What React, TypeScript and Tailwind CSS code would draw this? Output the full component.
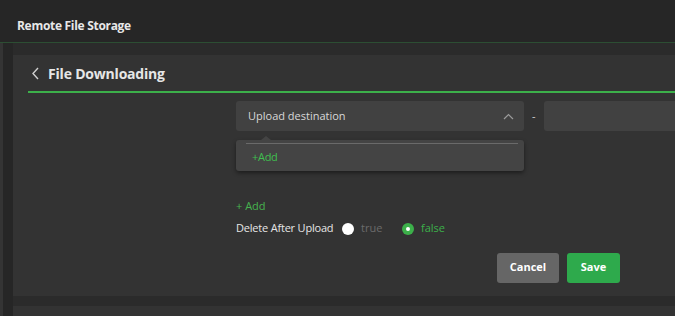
import React from "react";

const font = { fontFamily: '"Open Sans", "Noto Sans", sans-serif' };

function ChevronUp() {
  return (
    <svg width="11" height="7" viewBox="0 0 11 7" fill="none">
      <path d="M1 6 L5.5 1.5 L10 6" stroke="#9a9a9a" strokeWidth="1.2" />
    </svg>
  );
}

export default function App() {
  return (
    <div
      className="w-[675px] h-[316px] overflow-hidden bg-[#2b2b2b] text-white flex flex-col"
      style={font}
    >
      {/* top bar */}
      <div className="h-[43px] shrink-0 bg-[#262626] border-b border-[#2c4e33] flex items-center pl-[17px] pt-[10px]">
        <span className="text-[12px] font-bold text-[#e8e8e8] tracking-[-0.3px]">Remote File Storage</span>
      </div>

      <div className="flex flex-1 min-h-0">
        {/* left strip */}
        <div className="w-[13px] shrink-0 bg-[#262626] border-l-[3px] border-[#343434]" />

        <div className="flex-1 flex flex-col pt-[12px] min-w-0">
          {/* main panel */}
          <div className="h-[241px] shrink-0 bg-[#333333] pl-[15px]">
            <div className="h-[38px] flex items-center border-b-2 border-[#3cb04a] pl-[3px]">
              <svg width="9" height="13" viewBox="0 0 9 13" fill="none" className="mr-[8px]">
                <path d="M7 1 L2 6.5 L7 12" stroke="#d0d0d0" strokeWidth="1.4" />
              </svg>
              <span className="text-[14px] font-bold text-[#e6e6e6] tracking-[-0.2px]">File Downloading</span>
            </div>

            <div className="ml-[208px] pt-[8px]">
              {/* select row */}
              <div className="flex items-center">
                <div className="w-[288px] h-[30px] rounded-[3px] bg-[#414141] flex items-center justify-between pl-[12px] pr-[10px]">
                  <span className="text-[11px] text-[#d8d8d8]">Upload destination</span>
                  <ChevronUp />
                </div>
                <span className="mx-[8px] text-[11px] text-[#cfcfcf]">-</span>
                <div className="flex-1 h-[30px] rounded-l-[3px] bg-[#414141]" />
              </div>

              {/* dropdown */}
              <div className="relative mt-[9px] w-[288px] h-[31px] rounded-[3px] bg-[#444444] shadow-[0_2px_4px_rgba(0,0,0,0.45)]">
                <div className="absolute left-[25px] -top-[4px] w-0 h-0 border-l-[5px] border-r-[5px] border-b-[4px] border-l-transparent border-r-transparent border-b-[#444444]" />
                <div className="absolute left-[10px] right-[6px] top-[3px] h-px bg-[#6a6a6a]" />
                <div className="absolute left-[16px] top-[9px] text-[11px] text-[#3fbf4f] tracking-[-0.3px]">+Add</div>
              </div>

              <div className="mt-[27px] text-[11px] text-[#46b34f]">+ Add</div>

              <div className="mt-[6px] flex items-center h-[16px]">
                <span className="text-[11px] text-[#e6e6e6] w-[106px] tracking-[-0.2px]">Delete After Upload</span>
                <span className="w-[12px] h-[12px] rounded-full bg-white" />
                <span className="ml-[7px] text-[11px] text-[#6b6b6b] w-[41px]">true</span>
                <span className="w-[12px] h-[12px] rounded-full bg-[#3cb04a] flex items-center justify-center">
                  <span className="w-[4px] h-[4px] rounded-full bg-white" />
                </span>
                <span className="ml-[7px] text-[11px] text-[#3cb04a]">false</span>
              </div>

              <div className="mt-[16px] ml-[261px] flex gap-[8px]">
                <button className="w-[62px] h-[30px] rounded-[3px] bg-[#666666] text-[11px] font-bold text-white">
                  Cancel
                </button>
                <button className="w-[53px] h-[30px] rounded-[3px] bg-[#2eaa4c] text-[11px] font-bold text-white">
                  Save
                </button>
              </div>
            </div>
          </div>

          <div className="h-[10px] shrink-0" />
          <div className="flex-1 bg-[#333333]" />
        </div>
      </div>
    </div>
  );
}
